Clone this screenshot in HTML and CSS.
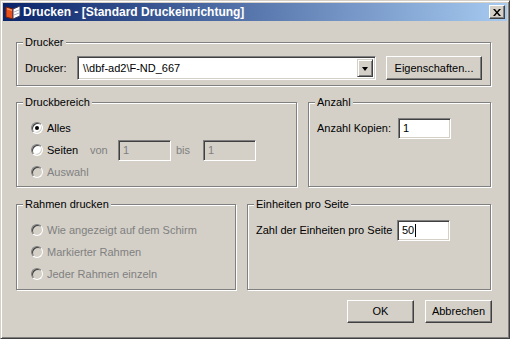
FILE: index.html
```html
<!DOCTYPE html>
<html lang="de">
<head>
<meta charset="utf-8">
<title>Drucken</title>
<link rel="stylesheet" href="styles.css">
</head>
<body>
<div class="window">
  <div class="titlebar">
    <svg class="app-icon" width="16" height="16" viewBox="0 0 16 16">
      <polygon points="1,3 8,5 8,15 1,13" fill="#E8501C" stroke="#7A1E08" stroke-width="1"/>
      <polygon points="2,4 7,5.5 7,7 2,5.5" fill="#F89860"/>
      <polygon points="8,5 15,2 15,12 8,15" fill="#FFFFFF" stroke="#3A3A5A" stroke-width="1"/>
      <line x1="9" y1="8" x2="14" y2="6" stroke="#B0B0C0"/>
      <line x1="9" y1="11" x2="14" y2="9" stroke="#B0B0C0"/>
    </svg>
    <span class="title">Drucken - [Standard Druckeinrichtung]</span>
    <span class="close-btn">
      <svg width="8" height="7" viewBox="0 0 8 7"><path d="M0,0h2l2,2.5l2,-2.5h2l-3,3.5l3,3.5h-2l-2,-2.5l-2,2.5h-2l3,-3.5z" fill="#000"/></svg>
    </span>
  </div>

  <div class="content">
    <fieldset class="group">
      <legend>Drucker</legend>
      <div class="group-body printer-body">
        <span class="printer-label">Drucker:</span>
        <div class="combo">
          <span class="combo-text">\\dbf-ad2\F-ND_667</span>
          <span class="combo-btn"><span class="arrow"></span></span>
        </div>
        <span class="btn btn-props">Eigenschaften...</span>
      </div>
    </fieldset>

    <div class="group-row">
      <fieldset class="group g-range">
        <legend>Druckbereich</legend>
        <div class="group-body radio-body">
          <div class="radio-row"><span class="radio checked"></span><span class="radio-label">Alles</span></div>
          <div class="radio-row">
            <span class="radio"></span><span class="radio-label wide">Seiten</span>
            <span class="disabled von">von</span>
            <span class="field disabled-field">1</span>
            <span class="disabled bis">bis</span>
            <span class="field disabled-field">1</span>
          </div>
          <div class="radio-row"><span class="radio off"></span><span class="radio-label disabled">Auswahl</span></div>
        </div>
      </fieldset>
      <fieldset class="group g-fill">
        <legend>Anzahl</legend>
        <div class="group-body input-body">
          <span class="input-label copies-label">Anzahl Kopien:</span>
          <span class="field">1</span>
        </div>
      </fieldset>
    </div>

    <div class="group-row row-3">
      <fieldset class="group g-frames">
        <legend>Rahmen drucken</legend>
        <div class="group-body radio-body tall">
          <div class="radio-row"><span class="radio off"></span><span class="radio-label disabled">Wie angezeigt auf dem Schirm</span></div>
          <div class="radio-row"><span class="radio off"></span><span class="radio-label disabled">Markierter Rahmen</span></div>
          <div class="radio-row"><span class="radio off"></span><span class="radio-label disabled">Jeder Rahmen einzeln</span></div>
        </div>
      </fieldset>
      <fieldset class="group g-fill">
        <legend>Einheiten pro Seite</legend>
        <div class="group-body input-body">
          <span class="input-label units-label">Zahl der Einheiten pro Seite</span>
          <span class="field">50<span class="caret"></span></span>
        </div>
      </fieldset>
    </div>

    <div class="actions">
      <span class="btn btn-action">OK</span>
      <span class="btn btn-action">Abbrechen</span>
    </div>
  </div>
</div>
</body>
</html>
```

FILE: styles.css
```css
* { box-sizing: border-box; }
html, body { margin: 0; padding: 0; }
body {
  width: 510px;
  height: 339px;
  overflow: hidden;
  background: #D4D0C8;
  font-family: "Liberation Sans", Arial, sans-serif;
  font-size: 11px;
  line-height: 13px;
  color: #000;
}

.window {
  width: 510px;
  height: 339px;
  background: #D4D0C8;
  border: 1px solid;
  border-color: #D4D0C8 #404040 #404040 #D4D0C8;
  box-shadow: inset 1px 1px #FFFFFF, inset -1px -1px #808080;
  padding: 2px;
  display: flex;
  flex-direction: column;
}

.titlebar {
  height: 18px;
  flex: none;
  display: flex;
  align-items: center;
  padding-left: 2px;
  background: linear-gradient(to right, #0A246A, #A6CAF0);
  color: #FFFFFF;
  font-weight: bold;
  font-size: 12px;
}
.app-icon { flex: none; margin-right: 2px; }
.title { white-space: nowrap; }
.close-btn {
  margin-left: auto;
  margin-right: 2px;
  width: 16px;
  height: 14px;
  display: flex;
  align-items: center;
  justify-content: center;
  background: #D4D0C8;
  border: 1px solid;
  border-color: #FFFFFF #404040 #404040 #FFFFFF;
  box-shadow: inset -1px -1px #808080;
}
.close-btn svg { display: block; margin-left: -1px; }

.content {
  flex: 1;
  padding: 15px 16px 0 13px;
  display: flex;
  flex-direction: column;
}

.group {
  margin: 0;
  padding: 0;
  min-width: 0;
  border: 1px solid #808080;
  box-shadow: inset 1px 1px #FFFFFF, 1px 1px #FFFFFF;
}
.group legend {
  margin-left: 6px;
  padding: 0 2px;
  background: #D4D0C8;
  line-height: 13px;
}
.group-body { display: flex; }

.printer-body {
  align-items: center;
  padding: 7px 0 5px 8px;
}
.printer-label { width: 52px; flex: none; }
.combo {
  width: 299px;
  height: 24px;
  display: flex;
  align-items: center;
  background: #FFFFFF;
  border: 1px solid;
  border-color: #808080 #FFFFFF #FFFFFF #808080;
  box-shadow: inset 1px 1px #404040, inset -1px -1px #D4D0C8;
  padding: 2px 2px 2px 5px;
}
.combo-text { flex: 1; }
.combo-btn {
  width: 16px;
  height: 18px;
  display: flex;
  align-items: center;
  justify-content: center;
  background: #D4D0C8;
  border: 1px solid;
  border-color: #D4D0C8 #404040 #404040 #D4D0C8;
  box-shadow: inset 1px 1px #FFFFFF, inset -1px -1px #808080;
}
.arrow {
  width: 0;
  height: 0;
  border-left: 3.5px solid transparent;
  border-right: 3.5px solid transparent;
  border-top: 4px solid #000;
  margin-top: 1px;
}

.btn {
  display: flex;
  align-items: center;
  justify-content: center;
  background: #D4D0C8;
  border: 1px solid;
  border-color: #FFFFFF #404040 #404040 #FFFFFF;
  box-shadow: inset -1px -1px #808080;
}
.btn-props {
  width: 96px;
  height: 24px;
  margin-left: 10px;
}

.group-row {
  display: flex;
  margin-top: 10px;
}
.row-3 { margin-top: 11px; }
.g-range { width: 281px; flex: none; }
.g-frames { width: 220px; flex: none; }
.g-fill { flex: 1; margin-left: 11px; }

.radio-body {
  flex-direction: column;
  padding: 8px 0 3px 14px;
}
.radio-body.tall { padding-bottom: 4px; }
.radio-row {
  height: 22px;
  display: flex;
  align-items: center;
}
.radio {
  position: relative;
  flex: none;
  width: 12px;
  height: 12px;
  border-radius: 50%;
  border: 1px solid;
  border-color: #808080 #FFFFFF #FFFFFF #808080;
  box-shadow: inset 1px 1px #404040, inset -1px -1px #D4D0C8;
  background: #FFFFFF;
}
.radio.off { background: #D4D0C8; }
.radio.checked::after {
  content: "";
  position: absolute;
  left: 3px;
  top: 3px;
  width: 4px;
  height: 4px;
  border-radius: 50%;
  background: #000;
}
.radio-label { margin-left: 4px; white-space: nowrap; }
.radio-label.wide { width: 43px; flex: none; }
.disabled { color: #808080; }
.von { width: 28px; flex: none; }
.bis { width: 27px; flex: none; margin-left: 5px; }

.field {
  width: 53px;
  height: 21px;
  flex: none;
  display: flex;
  align-items: center;
  padding-left: 4px;
  background: #FFFFFF;
  border: 1px solid;
  border-color: #808080 #FFFFFF #FFFFFF #808080;
  box-shadow: inset 1px 1px #404040, inset -1px -1px #D4D0C8;
}
.field.disabled-field { background: #D4D0C8; color: #808080; }
.caret {
  width: 1px;
  height: 13px;
  background: #000;
  margin-left: 1px;
}

.input-body {
  align-items: center;
  padding: 9px 0 0 8px;
}
.input-label { flex: none; white-space: nowrap; }
.copies-label { width: 81px; }
.units-label { width: 141px; }

.actions {
  display: flex;
  justify-content: flex-end;
  gap: 11px;
  margin-top: 10px;
  margin-right: -1px;
}
.btn-action { width: 67px; height: 23px; }
```
